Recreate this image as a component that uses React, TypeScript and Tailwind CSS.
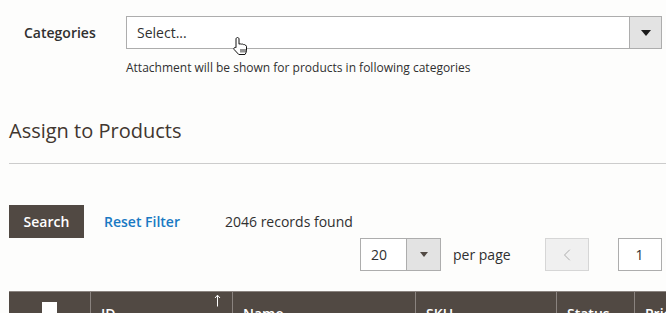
import { ChevronLeft } from "lucide-react";

const HandCursor = () => (
  <svg width="17" height="19" viewBox="0 0 17 19" className="absolute left-[232px] top-[37px]">
    <path
      d="M5.5 0.5 C6.3 0.5 7 1.2 7 2 V7.2 C7.4 6.8 8.6 6.7 9.1 7.3 C9.6 6.9 10.7 6.9 11.2 7.6 C11.7 7.3 12.8 7.4 13.2 8.2 C13.7 8.1 14.5 8.5 14.5 9.3 V13.2 C14.5 15 13.8 16.4 13 17.5 H6.8 L2.2 12.6 C1.6 11.9 1.8 10.9 2.6 10.5 C3.2 10.2 3.8 10.4 4 10.7 V2 C4 1.2 4.7 0.5 5.5 0.5 Z"
      fill="#fff"
      stroke="#111"
      strokeWidth="1"
      strokeLinejoin="round"
    />
    <path d="M9 12 V15.5 M11 12 V15.5 M13 12 V15.5" stroke="#111" strokeWidth="0.9" />
  </svg>
);

const SortArrow = () => (
  <svg width="7" height="13" viewBox="0 0 7 13" className="absolute right-[11px] top-[2px]">
    <path d="M3.5 12.5 V1.5 M1 4 L3.5 1.2 L6 4" stroke="#fff" strokeWidth="1" fill="none" />
  </svg>
);

const columns = [
  { label: "ID", width: "w-[142px]", sort: true },
  { label: "Name", width: "w-[183px]" },
  { label: "SKU", width: "w-[141px]" },
  { label: "Status", width: "w-[78px]" },
  { label: "Price", width: "w-[80px]" },
];

export default function App() {
  return (
    <div className="relative w-[666px] h-[313px] overflow-hidden bg-[#fdfdfc] text-[#303030] font-['Open_Sans',sans-serif]">
      {/* categories field */}
      <div className="flex pt-[16px] pl-[24px]">
        <label className="w-[102px] text-[14px] font-semibold leading-[33px] text-[#303030]">Categories</label>
        <div className="flex w-[536px] h-[33px] border border-[#adadad] bg-white">
          <span className="flex-1 pl-[10px] text-[14px] leading-[31px] text-[#303030]">Select...</span>
          <span className="flex w-[32px] items-center justify-center border-l border-[#adadad] bg-[#e3e3e3]">
            <span className="w-0 h-0 border-x-[5px] border-x-transparent border-t-[6px] border-t-[#1a1a1a]" />
          </span>
        </div>
      </div>
      <p className="ml-[126px] mt-[10px] text-[12px] leading-[18px] text-[#303030]">
        Attachment will be shown for products in following categories
      </p>

      {/* section title */}
      <h2 className="ml-[9px] mt-[40px] text-[20px] leading-[28px] text-[#41362f]">Assign to Products</h2>
      <div className="ml-[9px] mt-[18px] h-px bg-[#cccccc]" />

      {/* grid toolbar */}
      <div className="flex items-center mt-[41px] pl-[9px] h-[33px]">
        <button className="h-[33px] w-[75px] bg-[#514943] text-[14px] font-semibold text-white">Search</button>
        <a className="ml-[20px] text-[14px] font-semibold text-[#1979c3]">Reset Filter</a>
        <span className="ml-[45px] text-[14px] text-[#303030]">2046 records found</span>
      </div>
      <div className="flex items-center pl-[360px] h-[33px]">
        <div className="flex h-[33px] w-[81px] border border-[#adadad] bg-white">
          <span className="flex-1 pl-[10px] text-[14px] leading-[31px]">20</span>
          <span className="flex w-[34px] items-center justify-center border-l border-[#adadad] bg-[#e3e3e3]">
            <span className="w-0 h-0 border-x-[4px] border-x-transparent border-t-[5px] border-t-[#514943]" />
          </span>
        </div>
        <span className="ml-[12px] text-[14px]">per page</span>
        <div className="ml-[34px] flex h-[33px] w-[44px] items-center justify-center border border-[#d6d6d6] bg-[#f0f0f0]">
          <ChevronLeft size={20} strokeWidth={1.2} className="text-[#adadad]" />
        </div>
        <div className="ml-[29px] flex h-[33px] w-[44px] items-center justify-center border border-[#adadad] bg-white text-[14px]">
          1
        </div>
      </div>

      {/* table header */}
      <div className="flex mt-[20px] ml-[9px] h-[40px] bg-[#514943] border-t border-[#8a837f]">
        <div className="flex w-[82px] shrink-0 justify-center border-r border-[#8a837f] pt-[10px]">
          <span className="block w-[15px] h-[15px] bg-white" />
        </div>
        {columns.map((c) => (
          <div key={c.label} className={`relative ${c.width} shrink-0 border-r border-[#8a837f] pl-[10px] pt-[9px]`}>
            <span className="text-[14px] font-semibold text-white">{c.label}</span>
            {c.sort && <SortArrow />}
          </div>
        ))}
      </div>

      <HandCursor />
    </div>
  );
}
